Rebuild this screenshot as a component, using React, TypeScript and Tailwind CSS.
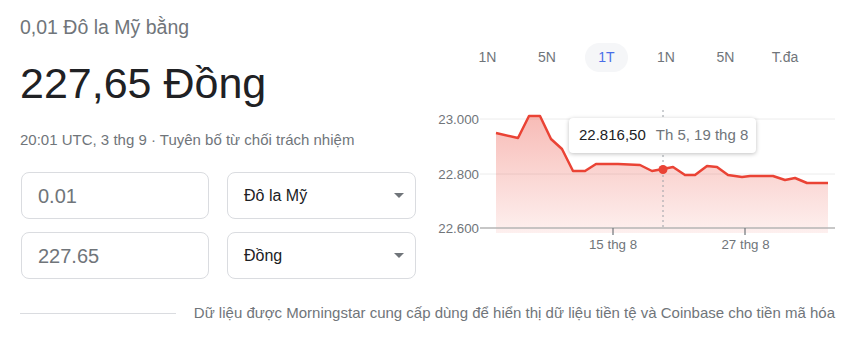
import React from 'react';

const tabs = ['1N', '5N', '1T', '1N', '5N', 'T.đa'];

// chart points in page coordinates (svg viewBox matches the page)
const points: [number, number][] = [
  [496, 133], [518, 138], [529, 116], [540, 116], [551, 139], [562, 149],
  [573, 171], [585, 171], [596, 164], [618, 164], [640, 165], [652, 171],
  [663, 169], [673, 167], [685, 175], [695, 175], [707, 166], [717, 167],
  [728, 175], [742, 177], [750, 176], [773, 176], [785, 180], [795, 178],
  [807, 183], [828, 183],
];

const linePath = points.map(([x, y], i) => `${i === 0 ? 'M' : 'L'}${x},${y}`).join(' ');
const areaPath = `${linePath} L828,233 L496,233 Z`;

const Caret = () => (
  <svg width="10" height="5" viewBox="0 0 10 5" className="shrink-0">
    <path d="M0 0 L10 0 L5 5 Z" fill="#70757a" />
  </svg>
);

const Field = ({ value }: { value: string }) => (
  <div className="flex h-[47px] w-[188px] items-center rounded-lg border border-[#dadce0] px-4 text-[20px] text-[#70757a]">
    {value}
  </div>
);

const Select = ({ label }: { label: string }) => (
  <div className="flex h-[47px] w-[189px] items-center justify-between rounded-lg border border-[#dadce0] pl-4 pr-[11px] text-[16px] text-[#202124]">
    <span>{label}</span>
    <Caret />
  </div>
);

const Chart = () => (
  <div className="relative ml-[14px] mt-[23px]">
    <svg width="418" height="165" viewBox="430 95 418 165" className="block">
      <defs>
        <linearGradient id="fill" x1="0" y1="116" x2="0" y2="233" gradientUnits="userSpaceOnUse">
          <stop offset="0" stopColor="#ea4335" stopOpacity="0.36" />
          <stop offset="1" stopColor="#ea4335" stopOpacity="0.08" />
        </linearGradient>
      </defs>
      <line x1="480" y1="119" x2="835" y2="119" stroke="#ececec" strokeWidth="1" />
      <line x1="480" y1="174" x2="835" y2="174" stroke="#ececec" strokeWidth="1" />
      <path d={areaPath} fill="url(#fill)" />
      <line x1="663" y1="110" x2="663" y2="228" stroke="#9aa0a6" strokeWidth="1" strokeDasharray="2 3" />
      <path d={linePath} fill="none" stroke="#ea4335" strokeWidth="2.5" strokeLinejoin="round" />
      <circle cx="663" cy="169.5" r="4.5" fill="#ea4335" />
      <line x1="480" y1="228" x2="835" y2="228" stroke="#b4b4b4" strokeWidth="1.5" />
      <line x1="613" y1="228" x2="613" y2="235" stroke="#70757a" strokeWidth="1.2" />
      <line x1="745" y1="228" x2="745" y2="235" stroke="#70757a" strokeWidth="1.2" />
      <g fill="#70757a" fontSize="13.3" fontFamily="'Liberation Sans', Arial, sans-serif">
        <text x="479" y="123.5" textAnchor="end">23.000</text>
        <text x="479" y="178.5" textAnchor="end">22.800</text>
        <text x="479" y="232.5" textAnchor="end">22.600</text>
        <text x="613" y="249" textAnchor="middle">15 thg 8</text>
        <text x="745.5" y="249" textAnchor="middle">27 thg 8</text>
      </g>
    </svg>
    <div className="absolute left-[139px] top-[23px] flex h-[35px] w-[187px] items-center rounded-sm bg-white pl-[10px] text-[15px] shadow-[0_1px_4px_rgba(0,0,0,0.25)]">
      <span className="text-[#202124]">22.816,50</span>
      <span className="ml-[10px] text-[#70757a]">Th 5, 19 thg 8</span>
    </div>
  </div>
);

export default function App() {
  return (
    <div className="h-[339px] w-[848px] bg-white font-['Liberation_Sans',Arial,sans-serif]">
      <div className="flex">
        <div className="w-[416px] pl-5 pt-[15px]">
          <div className="text-[19.5px] leading-6 text-[#70757a]">0,01 Đô la Mỹ bằng</div>
          <div className="mt-[18px] text-[43px] leading-[52px] text-[#202124]">227,65 Đồng</div>
          <div className="mt-[21px] text-[15px] leading-5 text-[#70757a]">
            20:01 UTC, 3 thg 9 · Tuyên bố từ chối trách nhiệm
          </div>
          <div className="mt-[22px] flex flex-col gap-[13px] pl-px">
            <div className="flex gap-[18px]">
              <Field value="0.01" />
              <Select label="Đô la Mỹ" />
            </div>
            <div className="flex gap-[18px]">
              <Field value="227.65" />
              <Select label="Đồng" />
            </div>
          </div>
        </div>
        <div className="flex-1">
          <div className="ml-[50px] mt-[43px] flex gap-[16.5px]">
            {tabs.map((t, i) => (
              <div
                key={i}
                className={`flex h-[29px] w-[43px] items-center justify-center rounded-full text-[14px] ${
                  i === 2 ? 'bg-[#f5f6f8] text-[#4a6ee8]' : 'text-[#70757a]'
                }`}
              >
                {t}
              </div>
            ))}
          </div>
          <Chart />
        </div>
      </div>
      <div className="mt-6 flex items-center gap-[18px] pl-5 pr-[13px]">
        <div className="h-px flex-1 bg-[#dadce0]" />
        <div className="text-[15px] leading-5 text-[#70757a]">
          Dữ liệu được Morningstar cung cấp dùng để hiển thị dữ liệu tiền tệ và Coinbase cho tiền mã hóa
        </div>
      </div>
    </div>
  );
}
